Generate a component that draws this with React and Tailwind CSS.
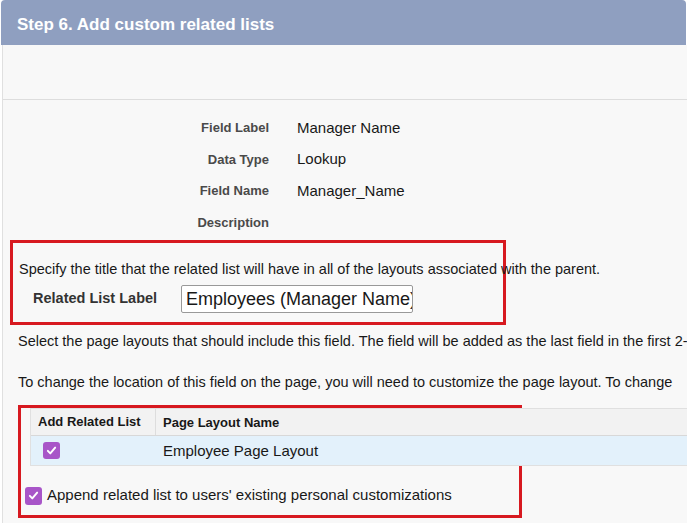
const Check = ({ className }) => (
  <span className={`flex items-center justify-center rounded-[3px] bg-[#a855c8] ${className}`}>
    <svg viewBox="0 0 16 16" className="h-[13px] w-[13px]" fill="none" stroke="white" strokeWidth="2.4" strokeLinecap="round" strokeLinejoin="round">
      <path d="M3.5 8.5l3 3 6-7" />
    </svg>
  </span>
);

export default function App() {
  const rows = [
    ['Field Label', 'Manager Name'],
    ['Data Type', 'Lookup'],
    ['Field Name', 'Manager_Name'],
    ['Description', ''],
  ];
  return (
    <div
      className="h-[523px] w-[687px] overflow-hidden bg-white text-[#181818]"
      style={{ fontFamily: '"Liberation Sans", Arial, sans-serif' }}
    >
      <div className="mx-[1px] h-[45px] rounded-t-[4px] bg-[#8f9fc0] px-[16px] pt-[12px] text-[17px] font-bold text-white">
        Step 6. Add custom related lists
      </div>
      <div className="ml-[2px] border-l border-[#e0e0e0] bg-[#f8f8f8]">
        <div className="h-[55px] border-b border-[#dddddd]" />
        <div className="pt-[12px]">
          {rows.map(([k, v]) => (
            <div key={k} className="flex h-[31.5px] items-center">
              <div className="w-[266px] text-right text-[13px] font-bold text-[#4a4a4a]">{k}</div>
              <div className="pl-[28px] text-[15px]">{v}</div>
            </div>
          ))}
        </div>
        <div className="ml-[7px] mt-[2px] w-[496px] border-[3px] border-[#d71920] pb-[9px] pl-[6px] pt-[16px]">
          <div className="whitespace-nowrap text-[14.5px]">Specify the title that the related list will have in all of the layouts associated with the parent.</div>
          <div className="mt-[4px] flex items-center">
            <span className="ml-[14px] w-[148px] text-[14.5px] font-bold text-[#333]">Related List Label</span>
            <div className="h-[28px] w-[232px] overflow-hidden whitespace-nowrap rounded-[2px] border border-[#999] bg-white px-[4px] text-[18px] leading-[26px]">
              Employees (Manager Name)
            </div>
          </div>
        </div>
        <div className="whitespace-nowrap pl-[15px] pt-[6px] text-[14.5px]">Select the page layouts that should include this field. The field will be added as the last field in the first 2-column section</div>
        <div className="whitespace-nowrap pl-[15px] pt-[19px] text-[14.5px]">To change the location of this field on the page, you will need to customize the page layout. To change</div>
        <div className="ml-[15px] mt-[12px] w-[504px] border-[3px] border-[#d71920] pb-[8px]">
          <div className="ml-[9px] w-[700px] border border-[#e0e0e0]">
            <div className="flex h-[26px] items-center bg-[#f2f2f2] text-[13px] font-bold">
              <div className="w-[125px] border-r border-[#dddddd] pl-[7px] leading-[26px]">Add Related List</div>
              <div className="pl-[7px]">Page Layout Name</div>
            </div>
            <div className="flex h-[30px] items-center border-t border-[#d8d8d8] bg-[#e3f1fb] text-[15px]">
              <div className="w-[125px] pl-[12px]"><Check className="h-[17px] w-[17px]" /></div>
              <div className="pl-[7px]">Employee Page Layout</div>
            </div>
          </div>
          <div className="mt-[18px] flex items-center pl-[4px] text-[15px]">
            <Check className="h-[18px] w-[17px]" />
            <span className="ml-[5px]">Append related list to users' existing personal customizations</span>
          </div>
        </div>
        <div className="mt-[12px] h-[10px] border-t border-[#dddddd]" />
      </div>
    </div>
  );
}
